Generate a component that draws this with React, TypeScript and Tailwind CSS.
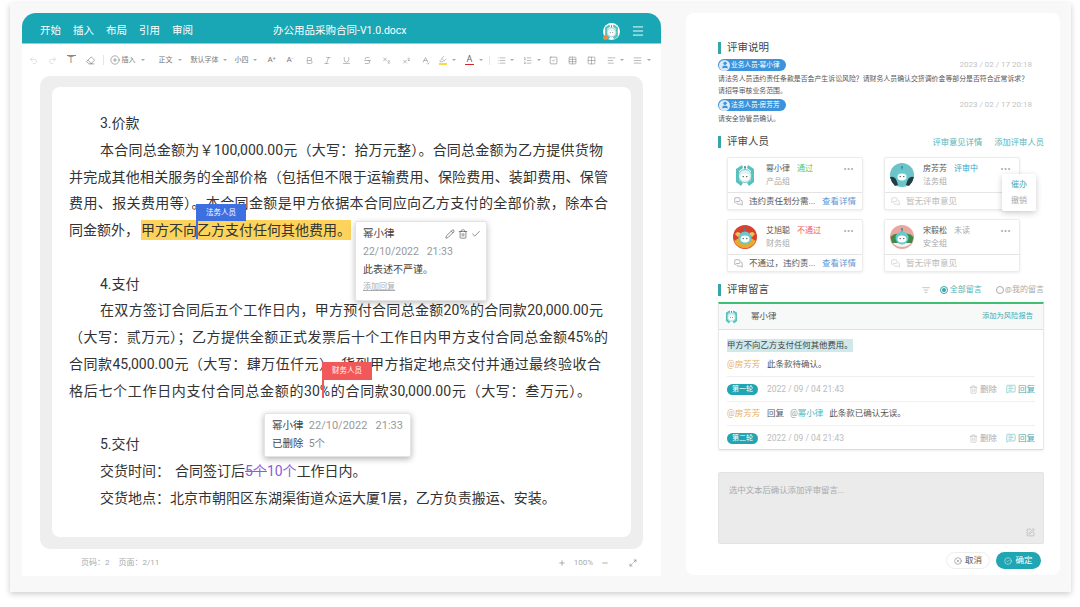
import React from "react";
import {
  Undo2, Redo2, Eraser, CirclePlus, Bold, Italic, Underline, Strikethrough, Subscript, Superscript,
  SpellCheck, Highlighter, List, ListOrdered, SquareCheck, Table, Grid2x2, AlignLeft, AlignJustify,
  Menu, Plus, Minus, Maximize2, Pencil, Trash2, Check, User, MessagesSquare, MessageSquareText, CircleX, CircleCheck,
  ListFilter, SquarePen,
} from "lucide-react";

const FONT = "font-['Roboto','Noto_Sans_CJK_SC',sans-serif]";

function Caret({ ml = "ml-[3px]" }: { ml?: string }) {
  return <span className={`${ml} w-0 h-0 shrink-0 border-x-[2px] border-x-transparent border-t-[2.5px] border-t-[#aaa]`} />;
}

function Robot({ kind, size = 24 }: { kind: number; size?: number }) {
  const bgs = ["#ffffff", "#6cc4c9", "#d8412f", "#e9a7a0"];
  return (
    <svg width={size} height={size} viewBox="0 0 24 24" className="shrink-0">
      <circle cx="12" cy="12" r="12" fill={bgs[kind]} />
      {kind === 0 && <path d="M3 6 L9 2 L10 5 L6 8 L6 17 L10 20 L8 23 L3 19Z M21 6 L15 2 L14 5 L18 8 L18 17 L14 20 L16 23 L21 19Z" fill="#58c0bd" />}
      {kind === 1 && <path d="M0 14 Q6 12 8 22 L5 23 Q1 19 0 14Z M24 14 Q18 12 16 22 L19 23 Q23 19 24 14Z" fill="#223d44" />}
      {kind === 2 && <path d="M1 16 A12 12 0 0 0 23 16 L18 13 L6 13Z" fill="#e8a92c" />}
      {kind === 2 && <path d="M2 9 Q5 5 8 9 L5 12Z M22 9 Q19 5 16 9 L19 12Z" fill="#f2c14e" />}
      {kind === 3 && <path d="M0.5 12 Q6 6 12 11 Q18 6 23.5 12 L22 18 L2 18Z" fill="#3f8a4a" />}
      {kind === 3 && <path d="M3 18 A12 12 0 0 0 21 18 Z" fill="#f4f4f4" />}
      <line x1="12" y1="4" x2="12" y2="8" stroke="#2f8f95" strokeWidth="1" />
      <circle cx="12" cy="4" r="1" fill="#2f8f95" />
      <circle cx="12" cy="13" r="6.5" fill={kind === 0 ? "#dff4f2" : "#65cbd0"} stroke={kind === 0 ? "#58c0bd" : "none"} strokeWidth="0.8" />
      <ellipse cx="12" cy="14" rx="4.5" ry="3.4" fill="#fff" />
      <circle cx="10.2" cy="13.6" r="0.7" fill="#333" />
      <circle cx="13.8" cy="13.6" r="0.7" fill="#333" />
    </svg>
  );
}

function Heading({ children }: { children: React.ReactNode }) {
  return (
    <div className="flex items-center h-4">
      <span className="w-[3px] h-[12px] bg-[#35a5a8]" />
      <span className="ml-[6px] text-[10.5px] leading-4 text-[#444]">{children}</span>
    </div>
  );
}

function Tb({ icon: I, ml, c = "#888" }: { icon: any; ml: string; c?: string }) {
  return <I size={9} strokeWidth={1.5} color={c} className={`${ml} shrink-0`} />;
}

function Toolbar() {
  return (
    <div className="h-[32px] flex items-center pl-[6.5px] text-[7px] text-[#777] whitespace-nowrap">
      <Tb icon={Undo2} ml="" c="#ccc" />
      <Tb icon={Redo2} ml="ml-[10px]" c="#ccc" />
      <span className="ml-[10px] text-[9px] leading-none text-[#888] w-[9px] border-t border-[#888] text-center">T</span>
      <Tb icon={Eraser} ml="ml-[10px]" c="#666" />
      <span className="ml-[8px] w-px h-[10px] bg-[#e6e6e6]" />
      <CirclePlus size={10} strokeWidth={1.3} color="#666" className="ml-[6px] shrink-0" />
      <span className="ml-[2px]">插入</span>
      <Caret ml="ml-[5px]" />
      <span className="ml-[14px]">正文</span>
      <Caret ml="ml-[5px]" />
      <span className="ml-[9px]">默认字体</span>
      <Caret ml="ml-[4px]" />
      <span className="ml-[8px]">小四</span>
      <Caret ml="ml-[4px]" />
      <span className="ml-[11px] w-[10px] text-[8px]">A<sup className="text-[5px]">+</sup></span>
      <span className="ml-[9px] w-[10px] text-[8px]">A<sup className="text-[5px]">-</sup></span>
      <Tb icon={Bold} ml="ml-[8px]" />
      <Tb icon={Italic} ml="ml-[9px]" />
      <Tb icon={Underline} ml="ml-[10px]" />
      <Tb icon={Strikethrough} ml="ml-[12px]" />
      <Tb icon={Subscript} ml="ml-[10px]" />
      <Tb icon={Superscript} ml="ml-[11px]" />
      <Tb icon={SpellCheck} ml="ml-[10px]" />
      <span className="ml-[9.5px] flex flex-col items-center">
        <Highlighter size={8} strokeWidth={1.5} color="#888" />
        <span className="w-[8px] h-[1.5px] bg-[#f2dc4a]" />
      </span>
      <Caret ml="ml-[5px]" />
      <span className="ml-[9px] flex flex-col items-center text-[9px] leading-[9px] text-[#666]">
        A<span className="w-[9px] h-[1.5px] bg-[#d5252e]" />
      </span>
      <Caret ml="ml-[5px]" />
      <span className="ml-[6px] w-px h-[9px] bg-[#e6e6e6]" />
      <Tb icon={List} ml="ml-[7px]" />
      <Caret ml="ml-[4px]" />
      <Tb icon={ListOrdered} ml="ml-[9px]" />
      <Caret ml="ml-[5px]" />
      <Tb icon={SquareCheck} ml="ml-[8px]" c="#777" />
      <Tb icon={Table} ml="ml-[10px]" />
      <Tb icon={Grid2x2} ml="ml-[10px]" />
      <Tb icon={AlignLeft} ml="ml-[11px]" />
      <Caret ml="ml-[4px]" />
      <Tb icon={AlignJustify} ml="ml-[9px]" />
      <Caret ml="ml-[5px]" />
    </div>
  );
}

function Line({ w, children, just = true, indent = false }: { w?: string; children?: React.ReactNode; just?: boolean; indent?: boolean }) {
  return (
    <div className={`h-[26.75px] whitespace-nowrap ${indent ? "ml-[31px]" : ""} ${w ?? ""} ${just ? "[text-align:justify] [text-align-last:justify] [white-space:normal] overflow-hidden" : ""}`}>
      {children}
    </div>
  );
}

function Doc() {
  return (
    <div className="relative mx-[18px] h-[473px] rounded-[10px] bg-[#eeeeee] px-[12px] pt-[11px]">
      <div className="h-[450px] rounded-[8px] bg-white pl-[17px] pr-[23px] pt-[23px] text-[14px] leading-[26.75px] text-[#333]">
        <Line just={false} indent>3.价款</Line>
        <Line w="w-[503px]" indent>本合同总金额为￥100,000.00元（大写：拾万元整）。合同总金额为乙方提供货物</Line>
        <Line>并完成其他相关服务的全部价格（包括但不限于运输费用、保险费用、装卸费用、保管</Line>
        <Line>费用、报关费用等）。本合同金额是甲方依据本合同应向乙方支付的全部价款，除本合</Line>
        <Line just={false}>
          同金额外，<span className="ml-[2px] bg-[#fdd35c] py-[2px]">甲方不向乙方支付任何其他费用。</span>
        </Line>
        <Line just={false} />
        <Line just={false} indent>4.支付</Line>
        <Line w="w-[503px]" indent>在双方签订合同后五个工作日内，甲方预付合同总金额20%的合同款20,000.00元</Line>
        <Line>（大写：贰万元）；乙方提供全额正式发票后十个工作日内甲方支付合同总金额45%的</Line>
        <Line w="w-[532px]">合同款45,000.00元（大写：肆万伍仟元），货到甲方指定地点交付并通过最终验收合</Line>
        <Line w="w-[522px]">格后七个工作日内支付合同总金额的30%的合同款30,000.00元（大写：叁万元）。</Line>
        <Line just={false} />
        <Line just={false} indent>5.交付</Line>
        <Line just={false} indent>
          交货时间：<span className="ml-[5px]">合同签订后</span><span className="text-[#8a5bd6] line-through">5个</span><span className="text-[#8a5bd6]">10个</span>工作日内。
        </Line>
        <Line just={false} indent>交货地点：北京市朝阳区东湖渠街道众运大厦1层，乙方负责搬运、安装。</Line>
      </div>

      {/* 法务人员 tag */}
      <div className="absolute left-[156px] top-[128px] w-[50px] h-[17px] bg-[#3d6fe0] text-white text-[7.5px] leading-[17px] text-center">法务人员</div>
      <div className="absolute left-[156px] top-[145px] w-[2px] h-[18px] bg-[#3d6fe0]" />
      {/* 财务人员 tag */}
      <div className="absolute left-[282px] top-[286px] w-[50px] h-[18px] bg-[#f2575a] text-white text-[7.5px] leading-[18px] text-center">财务人员</div>
      <div className="absolute left-[282px] top-[304px] w-[2px] h-[18px] bg-[#f2575a]" />

      {/* comment 1 */}
      <div className="absolute left-[315px] top-[145px] w-[132px] h-[80px] bg-white rounded-[2px] border border-[#e4e4e4] shadow-[0_2px_6px_rgba(0,0,0,0.25)] pl-[7px] pr-[5px]">
        <div className="flex items-center h-[16px] mt-[4px] text-[10.5px] leading-4 text-[#444]">
          <span>幂小律</span>
          <span className="ml-auto flex items-center gap-[3px]">
            <Pencil size={10} color="#555" strokeWidth={1.6} />
            <Trash2 size={10} color="#555" strokeWidth={1.6} />
            <Check size={10} color="#555" strokeWidth={1.6} />
          </span>
        </div>
        <div className="h-[17px] mt-[1px] text-[10.5px] leading-[17px] text-[#999] whitespace-pre">22/10/2022   21:33</div>
        <div className="h-[18px] mt-[1px] text-[10px] leading-[18px] text-[#444]">此表述不严谨。</div>
        <div className="mt-[1px] text-[8px] leading-[14px] text-[#aaa] underline">添加回复</div>
      </div>

      {/* comment 2 */}
      <div className="absolute left-[224px] top-[337px] w-[147px] h-[44px] bg-white rounded-[2px] border border-[#e4e4e4] shadow-[0_2px_6px_rgba(0,0,0,0.3)] pl-[7px]">
        <div className="mt-[3px] h-[17px] text-[10.5px] leading-[17px] text-[#444] whitespace-pre">
          幂小律 <span className="text-[#999] text-[11px]"> 22/10/2022   21:33</span>
        </div>
        <div className="mt-[1px] h-[17px] text-[10.5px] leading-[17px] text-[#444] whitespace-pre">
          已删除 <span className="text-[#888]"> 5个</span>
        </div>
      </div>
    </div>
  );
}

const people = [
  { name: "幂小律", status: "通过", sc: "text-[#58c76e]", group: "产品组", note: "违约责任划分需...", more: true, k: 0 },
  { name: "房芳芳", status: "评审中", sc: "text-[#35a5c8]", group: "法务组", note: "暂无评审意见", more: false, k: 1 },
  { name: "艾旭聪", status: "不通过", sc: "text-[#ee5b5b]", group: "财务组", note: "不通过，违约责...", more: true, k: 2 },
  { name: "宋毅松", status: "未读", sc: "text-[#aaa]", group: "安全组", note: "暂无评审意见", more: false, k: 3 },
];

function PersonCard({ p }: { p: (typeof people)[number] }) {
  return (
    <div className="h-[53px] rounded-[2px] bg-white border border-[#ececec] shadow-[0_1px_3px_rgba(0,0,0,0.08)]">
      <div className="h-[34px] flex items-center pl-[5px] pr-[8px]">
        <Robot kind={p.k} />
        <div className="ml-[9px] flex-1 min-w-0">
          <div className="text-[8px] leading-[13px] text-[#555]">
            {p.name}
            <span className={`ml-[7px] ${p.sc}`}>{p.status}</span>
          </div>
          <div className="text-[8px] leading-[13px] text-[#aaa]">{p.group}</div>
        </div>
        <span className="self-start mt-[5px] text-[9px] leading-[12px] tracking-[0.5px] text-[#aaa]">•••</span>
      </div>
      <div className="h-[18px] border-t border-[#e4e4e4] flex items-center pl-[6px] pr-[6px] text-[8.5px]">
        <MessagesSquare size={9} color={p.more ? "#777" : "#bbb"} strokeWidth={1.4} />
        <span className={`ml-[6px] ${p.more ? "text-[#555]" : "text-[#bbb]"}`}>{p.note}</span>
        {p.more && <span className="ml-auto text-[#5a98d8]">查看详情</span>}
      </div>
    </div>
  );
}

function Round({ label }: { label: string }) {
  return (
    <div className="h-[24px] flex items-center text-[8.5px] text-[#bbb]">
      <span className="w-[31px] h-[11px] rounded-full bg-[#1fa6b2] text-white text-[7px] leading-[11px] text-center">{label}</span>
      <span className="ml-[9px] text-[8.5px]">2022 / 09 / 04 21:43</span>
      <Trash2 size={9} color="#aaa" strokeWidth={1.3} className="ml-auto" />
      <span className="ml-[2px] text-[#aaa]">删除</span>
      <MessageSquareText size={10} color="#4db3b8" strokeWidth={1.3} className="ml-[9px]" />
      <span className="ml-[2px] text-[#3fa9b0]">回复</span>
    </div>
  );
}

function Badge({ children }: { children: React.ReactNode }) {
  return (
    <span className="flex items-center w-[68px] h-[12px] rounded-full bg-[#3b93dc] text-white text-[6.7px] whitespace-nowrap">
      <span className="w-[11px] h-[11px] ml-[1px] rounded-full bg-white/80 flex items-center justify-center"><User size={8} color="#3b93dc" fill="#3b93dc" /></span>
      <span className="ml-[1px]">{children}</span>
    </span>
  );
}

function Right() {
  return (
    <div className="relative w-[374px] h-[562px] bg-white rounded-[8px] pl-[32px] pr-[16px] pt-[27px]">
      <Heading>评审说明</Heading>
      <div className="mt-[3px] h-[12px] flex items-center">
        <Badge>业务人员-幂小律</Badge>
        <span className="ml-auto mr-[12px] text-[8px] text-[#c4c4c4]">2023 / 02 / 17 20:18</span>
      </div>
      <div className="mt-[2px] text-[6.9px] leading-[12px] text-[#555] whitespace-nowrap">
        请法务人员违约责任条款是否会产生诉讼风险？请财务人员确认交货调价金等部分是否符合近常诉求？<br />请招导审核业务范围。
      </div>
      <div className="mt-[2px] h-[12px] flex items-center">
        <Badge>法务人员-房芳芳</Badge>
        <span className="ml-auto mr-[12px] text-[8px] text-[#c4c4c4]">2023 / 02 / 17 20:18</span>
      </div>
      <div className="mt-[2px] text-[6.9px] leading-[12px] text-[#555]">请安全协管员确认。</div>

      <div className="mt-[9px] flex items-center justify-between">
        <Heading>评审人员</Heading>
        <div className="flex gap-[12px] text-[8.3px] text-[#55b5b9]">
          <span>评审意见详情</span>
          <span>添加评审人员</span>
        </div>
      </div>

      <div className="mt-[7px] ml-[9px] grid grid-cols-[136px_136px] gap-x-[21px] gap-y-[9px]">
        {people.map((p) => <PersonCard key={p.name} p={p} />)}
      </div>

      <div className="mt-[10px] flex items-center">
        <Heading>评审留言</Heading>
        <ListFilter size={8} color="#aaa" className="ml-auto" />
        <span className="ml-[10px] w-[8px] h-[8px] rounded-full border border-[#35a5a8] flex items-center justify-center"><span className="w-[4px] h-[4px] rounded-full bg-[#35a5a8]" /></span>
        <span className="ml-[2px] text-[8px] text-[#55b5b9]">全部留言</span>
        <span className="ml-[14px] w-[8px] h-[8px] rounded-full border border-[#aaa]" />
        <span className="ml-[1px] text-[8px] text-[#aaa]">@我的留言</span>
      </div>

      <div className="mt-[4px] h-[148px] border-t-[2.5px] border-t-[#3fbf72] border-x border-b border-x-[#e8e8e8] border-b-[#dcdcdc] rounded-b-[2px] shadow-[0_1px_2px_rgba(0,0,0,0.08)]">
        <div className="h-[26px] flex items-center bg-[#f7f9f9] border-b border-[#e0e0e0] pl-[5px] pr-[10px]">
          <Robot kind={0} size={15} />
          <span className="ml-[12px] text-[8.5px] text-[#555]">幂小律</span>
          <span className="ml-auto text-[7.3px] text-[#45abb2]">添加为风险报告</span>
        </div>
        <div className="px-[8px] pt-[9px]">
          <div className="w-fit h-[13px] bg-[#cfe8ea] text-[8.4px] leading-[13px] text-[#444]">甲方不向乙方支付任何其他费用。</div>
          <div className="mt-[6px] h-[12px] flex items-center text-[8.5px] text-[#555]">
            <span className="w-[40px] text-[#e9b062]">@房芳芳</span>
            <span>此条款待确认。</span>
          </div>
          <div className="mt-[6px] border-t border-[#f0f0f0]"><Round label="第一轮" /></div>
          <div className="h-[24px] border-t border-[#f0f0f0] flex items-center text-[8.5px] text-[#555]">
            <span className="w-[40px] text-[#e9b062]">@房芳芳</span>
            <span>回复</span>
            <span className="ml-[6px] text-[#55b5b9]">@幂小律</span>
            <span className="ml-[6px]">此条款已确认无误。</span>
          </div>
          <div className="border-t border-[#f0f0f0]"><Round label="第二轮" /></div>
        </div>
      </div>

      <div className="mt-[22px] h-[72px] bg-[#ebebeb] rounded-[2px] border border-[#e3e3e3] flex flex-col pl-[10px] pr-[8px] pt-[11px] pb-[6px]">
        <div className="text-[8.4px] leading-[12px] text-[#aaa]">选中文本后确认添加评审留言...</div>
        <SquarePen size={9} color="#b5b5b5" className="mt-auto ml-auto" />
      </div>

      <div className="mt-[8px] flex justify-end pr-[3px] gap-[6px] text-[8.5px]">
        <span className="w-[44px] h-[17px] rounded-full bg-white border border-[#eee] flex items-center justify-center gap-[3px] text-[#555]">
          <CircleX size={8} color="#666" strokeWidth={1.4} />取消
        </span>
        <span className="w-[45px] h-[17px] rounded-full bg-[#1fa6b2] flex items-center justify-center gap-[3px] text-white">
          <CircleCheck size={8} color="#fff" strokeWidth={1.4} />确定
        </span>
      </div>

      {/* 催办 popover */}
      <div className="absolute left-[316px] top-[161px] w-[34px] h-[37px] bg-white rounded-[2px] shadow-[0_2px_6px_rgba(0,0,0,0.2)] flex flex-col items-center justify-center gap-[4px] text-[8px] leading-[12px]">
        <span className="text-[#45abb2]">催办</span>
        <span className="text-[#aaa]">撤销</span>
      </div>
    </div>
  );
}

export default function App() {
  return (
    <div className={`w-[1080px] h-[607px] bg-white overflow-hidden pt-[3px] pl-[10px] ${FONT}`} lang="zh-CN">
      <div className="w-[1061px] h-[589px] bg-[#f8f8f8] shadow-[0_2px_6px_rgba(0,0,0,0.2)] pl-[12px] pt-[10px] flex gap-[25px]">
        <div className="w-[639px] h-[563px] bg-white rounded-t-[14px]">
          <div className="h-[31px] rounded-t-[14px] bg-[#19a7b6] border-b border-[#8fdc9a] flex items-center pl-[18px] pr-[16px] pt-[6px] text-white text-[10.5px]">
            <div className="flex gap-[12px]">
              <span>开始</span><span>插入</span><span>布局</span><span>引用</span><span>审阅</span>
            </div>
            <span className="ml-[80px] text-[10.5px]">办公用品采购合同-V1.0.docx</span>
            <span className="ml-auto relative">
              <Robot kind={0} size={17} />
              <span className="absolute left-[0px] bottom-[0px] w-[5px] h-[5px] rounded-full bg-[#ef8a3a]" />
            </span>
            <Menu size={14} color="#fff" strokeWidth={1.6} className="ml-[11px]" />
          </div>
          <Toolbar />
          <Doc />
          <div className="h-[27px] flex items-center pl-[59px] pr-[24px] pt-[1px] text-[8px] text-[#aaa]">
            <span>页码：2</span>
            <span className="ml-[9px]">页面：2/11</span>
            <Plus size={8} color="#888" className="ml-auto" />
            <span className="ml-[8px]">100%</span>
            <Minus size={8} color="#888" className="ml-[8px]" />
            <Maximize2 size={8} color="#888" className="ml-[20px]" />
          </div>
        </div>
        <Right />
      </div>
    </div>
  );
}
